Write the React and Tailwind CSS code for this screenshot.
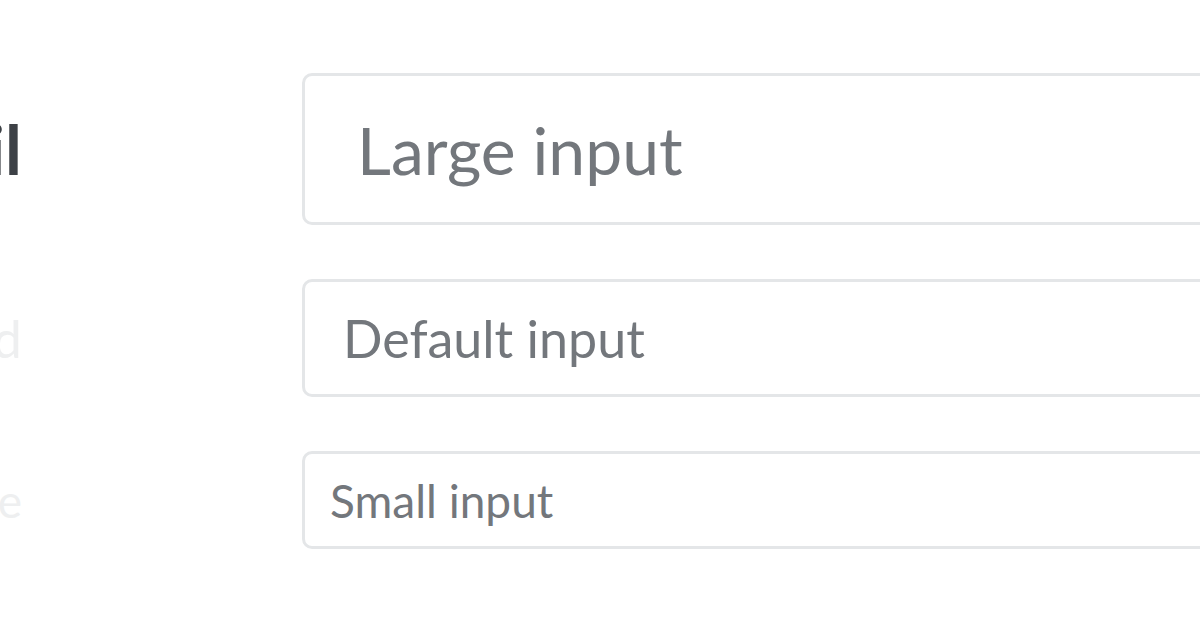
import React from 'react';

const rows = [
  { label: 'Email', placeholder: 'Large input', size: 'lg' },
  { label: 'Password', placeholder: 'Default input', size: 'md' },
  { label: 'Name', placeholder: 'Small input', size: 'sm' },
];

const inputClass = {
  lg: 'h-[152px] pl-[52px] text-[66px]',
  md: 'h-[118px] pl-[38px] text-[52px]',
  sm: 'h-[98px] pl-[25px] text-[46px]',
};

const labelClass = {
  lg: 'text-[68px] font-bold text-[#3d4146]',
  md: 'text-[52px] text-[#eeeff0]',
  sm: 'text-[46px] text-[#eeeff0]',
};

const FormRow = ({ label, placeholder, size }) => (
  <div className="flex items-center">
    {/* label column is cut off at the left edge, only its tail shows */}
    <div className="w-[302px] shrink-0 flex justify-end pr-[280px]">
      <label className={`whitespace-nowrap ${labelClass[size]}`}>{label}</label>
    </div>
    <input
      type="text"
      placeholder={placeholder}
      className={`w-[1000px] shrink-0 rounded-[10px] border-[3px] border-[#e4e6e8] bg-white text-[#6c7075] placeholder:text-[#73777c] outline-none ${inputClass[size]}`}
    />
  </div>
);

export default function App() {
  return (
    <div
      className="w-[1200px] h-[628px] overflow-hidden bg-white"
      style={{ fontFamily: 'Lato, "Noto Sans", sans-serif' }}
    >
      <div className="flex flex-col gap-[54px] pt-[73px]">
        {rows.map(row => (
          <FormRow key={row.label} {...row} />
        ))}
      </div>
    </div>
  );
}
